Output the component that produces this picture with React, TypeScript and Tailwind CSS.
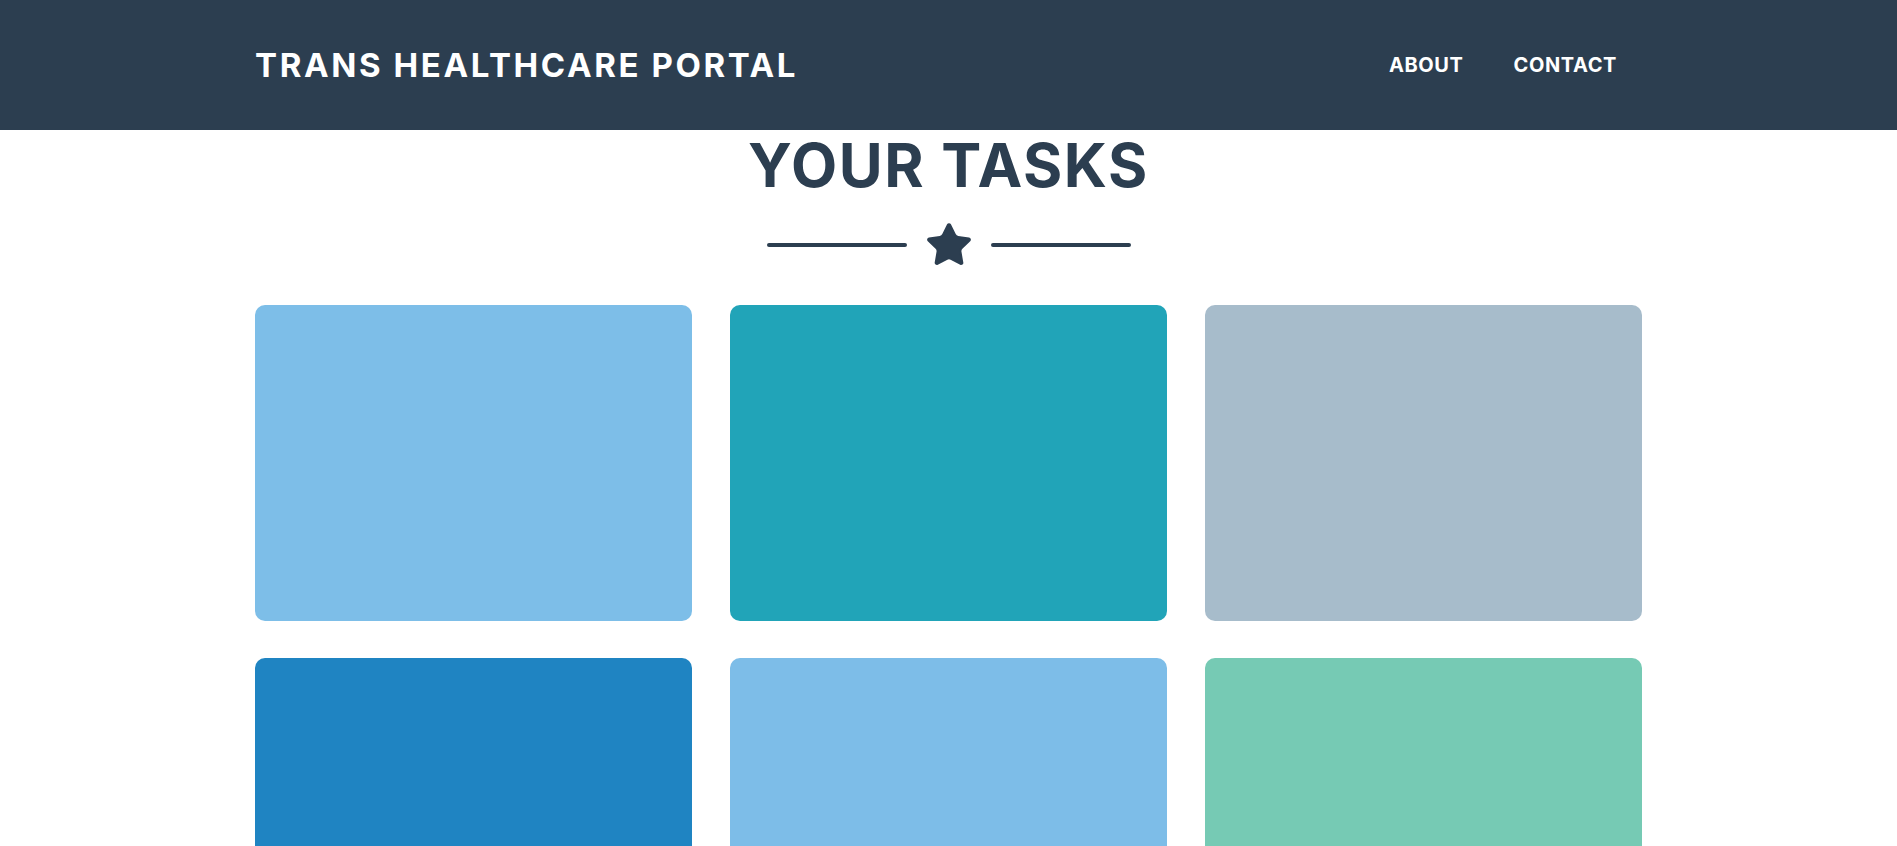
import React from 'react';

const tasks = [
  { id: 1, color: 'bg-[#7dbee8]' },
  { id: 2, color: 'bg-[#21a4b8]' },
  { id: 3, color: 'bg-[#a7bccb]' },
  { id: 4, color: 'bg-[#1f84c2]' },
  { id: 5, color: 'bg-[#7dbde8]' },
  { id: 6, color: 'bg-[#76cab4]' },
];

function StarDivider() {
  return (
    <div className="mt-[25px] mb-[35px] flex items-center justify-center gap-[17px]">
      <div className="h-[4px] w-[140px] rounded-full bg-[#2c3e50]" />
      <svg viewBox="0 0 24 24" className="h-[50px] w-[50px]" fill="#2c3e50" stroke="#2c3e50" strokeWidth={1} strokeLinejoin="round">
        <path d="M11.525 2.295a.53.53 0 0 1 .95 0l2.31 4.679a2.123 2.123 0 0 0 1.595 1.16l5.166.756a.53.53 0 0 1 .294.904l-3.736 3.638a2.123 2.123 0 0 0-.611 1.878l.882 5.14a.53.53 0 0 1-.771.56l-4.618-2.428a2.122 2.122 0 0 0-1.973 0L6.396 21.01a.53.53 0 0 1-.77-.56l.881-5.139a2.122 2.122 0 0 0-.611-1.879L2.16 9.795a.53.53 0 0 1 .294-.906l5.165-.755a2.122 2.122 0 0 0 1.597-1.16z" />
      </svg>
      <div className="h-[4px] w-[140px] rounded-full bg-[#2c3e50]" />
    </div>
  );
}

export default function App() {
  return (
    <div className="min-h-screen bg-white font-['Inter',sans-serif]">
      <nav className="bg-[#2c3e50]">
        <div className="mx-auto flex h-[130px] w-[1387px] items-center justify-between">
          <a href="#" className="text-[33px] font-bold uppercase leading-none tracking-[2.6px] text-white">
            Trans Healthcare Portal
          </a>
          <ul className="flex items-center">
            <li>
              <a href="#" className="px-[25px] text-[20px] font-bold uppercase tracking-[0.6px] text-white">About</a>
            </li>
            <li>
              <a href="#" className="px-[25px] text-[20px] font-bold uppercase tracking-[0.6px] text-white">Contact</a>
            </li>
          </ul>
        </div>
      </nav>

      <section className="mx-auto w-[1387px]">
        <h2 className="mt-[5px] text-center text-[60px] font-bold uppercase leading-none tracking-[1.6px] text-[#2c3e50]">
          Your Tasks
        </h2>
        <StarDivider />
        <div className="grid grid-cols-3 gap-x-[38px] gap-y-[37px]">
          {tasks.map(task => (
            <div key={task.id} className={`h-[316px] rounded-[10px] ${task.color}`} />
          ))}
        </div>
      </section>
    </div>
  );
}
